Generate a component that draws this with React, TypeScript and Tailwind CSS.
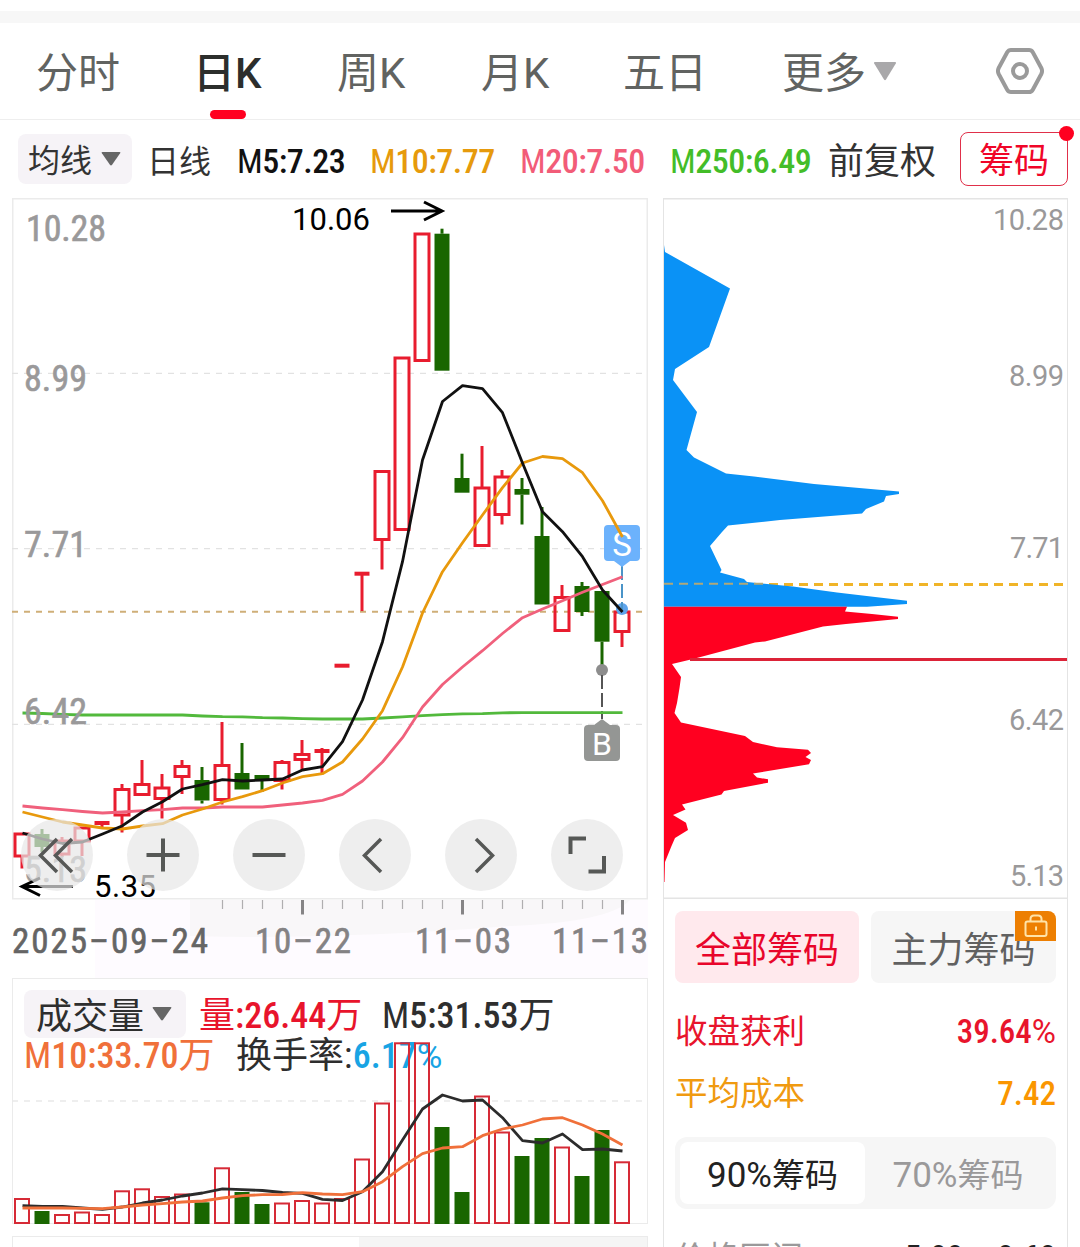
const CJK = "font-['Roboto','Noto_Sans_CJK_SC',sans-serif]";

type Candle = {
  up: boolean;
  top: number;
  bottom: number;
  high?: number;
  low?: number;
  flat?: boolean;
};

const CANDLES: Candle[] = [
  { up: true, top: 834, bottom: 856, low: 868.5 },
  { up: false, top: 834, bottom: 847, high: 829, low: 852 },
  { up: true, top: 841, bottom: 854, high: 837, low: 857 },
  { up: true, top: 828, bottom: 841, low: 856 },
  { up: true, top: 823, bottom: 823, low: 828, flat: true },
  { up: true, top: 789.5, bottom: 815, high: 784, low: 832.5 },
  { up: true, top: 784.5, bottom: 794.5, high: 760 },
  { up: true, top: 788, bottom: 798.5, high: 774, low: 818.5 },
  { up: true, top: 766.5, bottom: 776.5, high: 760, low: 794 },
  { up: false, top: 780, bottom: 800.5, high: 767, low: 803.5 },
  { up: true, top: 765.5, bottom: 799.5, high: 722, low: 804.5 },
  { up: false, top: 773, bottom: 789.5, high: 743 },
  { up: false, top: 775, bottom: 781, low: 792 },
  { up: true, top: 762.5, bottom: 780.5, high: 760, low: 789.5 },
  { up: true, top: 754.5, bottom: 759.5, high: 740, low: 770 },
  { up: true, top: 751, bottom: 751, high: 748, low: 773, flat: true },
  { up: true, top: 665.7, bottom: 665.7, flat: true },
  { up: true, top: 573.7, bottom: 573.7, low: 611, flat: true },
  { up: true, top: 471.5, bottom: 539.5, low: 569.5 },
  { up: true, top: 358, bottom: 529.5 },
  { up: true, top: 234, bottom: 360.5 },
  { up: false, top: 233.7, bottom: 370.7, high: 228.7 },
  { up: false, top: 478, bottom: 492.7, high: 453.7 },
  { up: true, top: 488, bottom: 545.5, high: 446 },
  { up: true, top: 477, bottom: 514.5, high: 470, low: 524.5 },
  { up: false, top: 489, bottom: 494.7, high: 478, low: 524.5 },
  { up: false, top: 536, bottom: 604.5, high: 507 },
  { up: true, top: 597.5, bottom: 630.5, high: 585 },
  { up: false, top: 586, bottom: 612, high: 582, low: 616 },
  { up: false, top: 591, bottom: 641.7, low: 669 },
  { up: true, top: 612, bottom: 631.5, low: 647 },
];

const MA5 = [833, 839, 843.5, 842, 834, 825.7, 812, 801.7, 789, 784.7, 779.7, 781, 780, 779, 770, 766.7, 741.7, 700, 641.7, 561.7, 460, 401.5, 385.7, 388.7, 412.7, 463, 511.7, 531.7, 556.7, 590, 612];
const MA10 = [812, 817, 822, 825, 828, 829, 826, 823.7, 815, 809, 802, 796.7, 790.7, 783, 776.7, 773.7, 762, 739, 710.7, 667, 613, 571.7, 542.7, 515, 487.7, 463, 456.5, 458.7, 472.7, 500.7, 537];
const MA20 = [806, 808, 809.7, 811.5, 813, 812, 810.7, 809.7, 808, 808, 807, 807, 807, 805, 803, 800.3, 794.3, 781, 762, 737.7, 707, 684.5, 667, 650.7, 633.5, 617.7, 609, 600.7, 592.3, 584.5, 576.7];
const MA250 = [713, 713.5, 714.3, 715, 715, 715, 715, 715, 715, 716, 716.7, 716.9, 717.7, 718, 718.7, 719, 719, 719, 718, 716.8, 715.7, 714.7, 713.9, 713.7, 712.8, 712.7, 712.7, 712.7, 712.7, 712.7, 712.7];

const VOLUMES = [1199, 1211, 1215, 1212.5, 1215, 1191.3, 1189.3, 1197, 1194.5, 1202.3, 1168.3, 1192, 1204, 1203.5, 1201, 1203.5, 1199, 1159.5, 1103.5, 1043.3, 1043.3, 1127, 1192, 1096.5, 1132.5, 1156, 1138, 1147.5, 1176, 1130, 1162.3];
const VOL5 = [1205.7, 1206.5, 1206.5, 1208, 1209.3, 1207, 1203, 1200, 1196, 1193, 1188.8, 1189.7, 1190.5, 1192.5, 1193.3, 1199.3, 1200.5, 1191.7, 1171.7, 1140, 1109, 1095, 1101, 1100, 1117.7, 1140.7, 1143, 1134, 1149.7, 1149, 1151];
const VOL10 = [1208, 1208, 1208, 1208.3, 1208.7, 1207, 1205, 1203.7, 1202, 1201, 1198, 1195.7, 1194.7, 1194.5, 1192.7, 1194, 1194.7, 1191.7, 1181.7, 1166.7, 1153.7, 1148, 1146.7, 1135.7, 1129, 1125, 1119, 1117.7, 1125, 1134, 1145];

const CHIPS_ABOVE =
  "664,245 665,252 730,288.5 709,347 675,369 673,380 697,412 686.5,450 694,457.5 726,473.5 754,476.5 814,484 899,491.5 899,494 886,496 884,501.5 866,509 862,513.5 780,520 728,525.5 722,532 710,546 721.5,570 720,572.5 744,579 747,582 793,586.5 837,592.5 907,600.7 907,604 867,606.7 664,606.7";
const CHIPS_BELOW =
  "664,606.7 847,606.7 845,611.5 872,614 898,616.7 898,619 846,624 823,626.5 765,641.5 755,642.5 693,659 672,664 681,677 679.5,688 677,703 674.5,713 681,722.5 745,736 753,742 777,747.3 808,749.7 811,753 805.5,757 811,760 809,764.3 753,773.5 757,777.5 768,779.3 768,782.7 724,791 721.5,794.5 682,804.5 685.5,809.5 673,815 686,822.7 688,830 675,838 671.5,846 665,862 664.5,882 664,882";

const x = (i: number) => 22 + i * 20;
const line = (values: number[]) => values.map((v, i) => `${x(i) + 0.5},${v}`).join(" ");

const TABS = [
  { label: "分时", width: "w-[157px]" },
  { label: "日K", width: "w-[144px]", active: true },
  { label: "周K", width: "w-[144px]" },
  { label: "月K", width: "w-[142px]" },
  { label: "五日", width: "w-[159px]" },
];

const AVERAGES = [
  { name: "M5", value: "7.23", style: "w-[133px] text-[#111]" },
  { name: "M10", value: "7.77", style: "w-[150px] text-[#e69a0c]" },
  { name: "M20", value: "7.50", style: "w-[150px] text-[#f25c78]" },
  { name: "M250", value: "6.49", style: "w-[158px] text-[#43bd28]" },
];

function Average({ name, value }: { name: string; value: string }) {
  return (
    <>
      <span className="font-normal">M</span>
      <span className="font-medium">{name.slice(1)}:{value}</span>
    </>
  );
}

function Tabs() {
  return (
    <div className="flex h-[97px] items-center border-b border-[#eeeeee] pl-[36px] text-[42px] text-[#616361]">
      {TABS.map((t) => (
        <div
          key={t.label}
          className={`relative flex h-full shrink-0 items-center pt-[5px] whitespace-nowrap ${t.width} ${t.active ? "font-medium text-[#2c2e2c]" : ""}`}
        >
          {t.label}
          {t.active && <span className="absolute bottom-0 left-[17px] h-[9px] w-9 rounded-full bg-[#ff0020]" />}
        </div>
      ))}
      <div className="flex w-[213px] items-center gap-[7px]">
        <span className="shrink-0 pt-[5px]">更多</span>
        <svg width="24" height="20" viewBox="0 0 24 20" className="shrink-0">
          <path d="M2 1h20q1.500 0 .8 1.400L13 18.500q-1 1.300-2 0L1.200 2.400Q.5 1 2 1z" fill="#a9a8aa" />
        </svg>
      </div>
      <svg width="50" height="50" viewBox="0 0 50 50" fill="none" stroke="#9a9a9a">
        <path d="M16 4h18q2.500 0 3.800 2.300l8.500 15.700q1.500 3 0 6l-8.500 15.700q-1.300 2.300-3.800 2.300H16q-2.500 0-3.800-2.300L3.700 28q-1.500-3 0-6l8.500-15.700Q13.500 4 16 4z" strokeWidth="4" />
        <circle cx="25" cy="25" r="7" strokeWidth="4" />
      </svg>
    </div>
  );
}

function Caret() {
  return (
    <svg width="20" height="14" viewBox="0 0 20 14" className="shrink-0">
      <path d="M1.500 0h17q1.500 0 .6 1.300l-8 11.500q-1.100 1.300-2.200 0l-8-11.500Q0 0 1.500 0z" fill="#666" />
    </svg>
  );
}

function AverageBar() {
  return (
    <div className="flex h-[78px] items-center pl-[18px] text-[32px] text-[#333]">
      <div className="flex h-[50px] w-[114px] items-center justify-between rounded-lg bg-[#f6f3f7] pr-[11px] pl-[10px]">
        <span className="pt-1">均线</span>
        <Caret />
      </div>
      <span className="ml-[15px] w-[90px] pt-[5px]">日线</span>
      {AVERAGES.map((a) => (
        <span
          key={a.name}
          className={`shrink-0 pt-[3px] text-[34px] tracking-[-0.5px] whitespace-nowrap [font-stretch:75%] ${a.style}`}
        >
          <Average name={a.name} value={a.value} />
        </span>
      ))}
      <span className="w-[132px] pt-[5px] text-[36px] whitespace-nowrap">前复权</span>
      <div className="relative flex h-[54px] w-[108px] items-center justify-center rounded-lg border-[1.500px] border-[#e0304a] pt-[5px] text-[35px] text-[#f00528]">
        筹码
        <span className="absolute -top-[7px] -right-[7px] size-[15px] rounded-full bg-[#ff0020]" />
      </div>
    </div>
  );
}

function RoundButtons() {
  return (
    <g>
      {[57, 163, 269, 375, 481, 587].map((cx) => (
        <circle key={cx} cx={cx} cy="855" r="36" fill="#e7e7e7" fillOpacity="0.7" />
      ))}
      <g fill="none" stroke="#565856" strokeWidth="4">
        <path d="M57 839l-16.500 16.500L57 872M72 839l-16.500 16.500L72 872" strokeWidth="3.500" />
        <path d="M146.500 855h33M163 838.500v33" />
        <path d="M252.500 855h33" />
        <path d="M381 839l-16.500 16.500L381 872M476 839l16.500 16.500L476 872" strokeWidth="3.500" />
        <path d="M570.500 854v-15.500H586M604 856v15.500H588.500" />
      </g>
    </g>
  );
}

function CandleChart() {
  return (
    <svg width="636" height="702" viewBox="12 198 636 702" className="block overflow-visible">
      <rect x="12.750" y="198.750" width="634.500" height="700" fill="#fff" stroke="#ebebeb" strokeWidth="1.500" />
      <g stroke="#e2e2e2" strokeWidth="1.200" strokeDasharray="6 6">
        <path d="M12 373.300h636M12 548.700h636M12 724.300h636" />
      </g>
      <path d="M12 611.700h636" stroke="#cfaf78" strokeWidth="2" strokeDasharray="6 6" />

      {CANDLES.map((c, i) => {
        const color = c.up ? "#e81c2e" : "#196600";
        return (
          <g key={i} stroke={color} strokeWidth="3" fill="none">
            {c.high !== undefined && <path d={`M${x(i)} ${c.high}V${c.top}`} />}
            {c.low !== undefined && <path d={`M${x(i)} ${c.bottom}V${c.low}`} />}
            {c.flat ? (
              <path d={`M${x(i) - 7.5} ${c.top}h15`} strokeWidth="4" />
            ) : c.up ? (
              <rect x={x(i) - 7} y={c.top} width="14" height={c.bottom - c.top} />
            ) : (
              <rect x={x(i) - 7.5} y={c.top} width="15" height={c.bottom - c.top} fill={color} stroke="none" />
            )}
          </g>
        );
      })}

      {/* sell and buy markers */}
      <circle cx="622" cy="609" r="6" fill="#5fa4ec" />
      <path d="M622 566v44" stroke="#4a94c8" strokeWidth="2" strokeDasharray="14 4" />
      <path d="M608 525h28q4 0 4 4v28q0 4-4 4h-6l-8 6-8-6h-6q-4 0-4-4v-28q0-4 4-4z" fill="#6cb2fc" />
      <text x="622" y="556" fontSize="33" fill="#fff" textAnchor="middle">S</text>
      <circle cx="602" cy="670" r="6" fill="#8d8d8d" />
      <path d="M602 675v44" stroke="#555" strokeWidth="2" strokeDasharray="14 4" />
      <path d="M588 725h6l8-6 8 6h6q4 0 4 4v28q0 4-4 4h-28q-4 0-4-4v-28q0-4 4-4z" fill="#949694" />
      <text x="602" y="755" fontSize="32" fill="#fff" textAnchor="middle">B</text>

      <g fill="none" strokeWidth="2.800" strokeLinejoin="round">
        <polyline points={line(MA250)} stroke="#52b93c" />
        <polyline points={line(MA20)} stroke="#f0607c" />
        <polyline points={line(MA10)} stroke="#e8990c" />
        <polyline points={line(MA5)} stroke="#111" />
      </g>

      <g fill="#9a999a" stroke="#9a999a" strokeWidth="0.600" fontSize="36" className="[font-stretch:75%]">
        <text x="26" y="241" textLength="80">10.28</text>
        <text x="24" y="391" textLength="63">8.99</text>
        <text x="24" y="557" textLength="63">7.71</text>
        <text x="24" y="724" textLength="63">6.42</text>
        <text x="24" y="882" textLength="63">5.13</text>
      </g>
      <text x="292" y="230" fontSize="31" textLength="78">10.06</text>
      <text x="94" y="897" fontSize="31" textLength="62">5.35</text>
      <g fill="none" stroke="#000" strokeWidth="3">
        <path d="M391 211h50M424 202l18 9-18 9" />
        <path d="M73 886.500H22M40 878l-18 8.500 18 9" />
      </g>
      <RoundButtons />
    </svg>
  );
}

function DateAxis() {
  return (
    <svg width="636" height="78" viewBox="12 900 636 78" className="block">
      <rect x="95" y="900" width="553" height="78" fill="#fefbff" />
      <path d="M190 900h440q-20 22-120 26-180 14-320 10z" fill="#f9f7f9" />
      {Array.from({ length: 21 }, (_, i) => i + 10).map((i) => {
        const major = (i - 14) % 8 === 0;
        return (
          <path
            key={i}
            d={`M${x(i) + 0.5} 900v${major ? 14.5 : 9}`}
            stroke={major ? "#868486" : "#b0aeb0"}
            strokeWidth={major ? 3 : 1.2}
          />
        );
      })}
      <g fontSize="35" fill="#848284" stroke="#848284" strokeWidth="0.600" className="[font-stretch:75%]">
        <text x="12" y="953" textLength="196" fill="#656565" stroke="#656565">2025–09–24</text>
        <text x="255" y="953" textLength="96">10–22</text>
        <text x="415" y="953" textLength="96">11–03</text>
        <text x="552" y="953" textLength="96">11–13</text>
      </g>
    </svg>
  );
}

function VolumeBars() {
  return (
    <svg width="636" height="184" viewBox="12 1040 636 184" className="absolute -bottom-px -left-px">
      <path d="M12 1101h636" stroke="#e9e9e9" strokeWidth="1.500" strokeDasharray="6 6" />
      {VOLUMES.map((top, i) =>
        CANDLES[i].up ? (
          <rect key={i} x={x(i) - 7} y={top} width="14" height={1223 - top} fill="none" stroke="#d62a36" strokeWidth="2" />
        ) : (
          <rect key={i} x={x(i) - 7.5} y={top} width="15" height={1224 - top} fill="#196600" />
        )
      )}
      <g fill="none" strokeWidth="2.800" strokeLinejoin="round">
        <polyline points={line(VOL5)} stroke="#2c2c2c" />
        <polyline points={line(VOL10)} stroke="#f0703a" />
      </g>
    </svg>
  );
}

function VolumePanel() {
  return (
    <div className="relative h-[246px] border-[1.500px] border-[#ebebeb] pt-[11px] pl-[11px] text-[36px] text-[#2e2e2e]">
      <div className="flex h-[48px] items-center whitespace-nowrap">
        <div className="flex h-[48px] w-[162px] items-center justify-between rounded-lg bg-[#f6f3f7] pr-[14px] pl-[12px]">
          <span className="pt-[5px]">成交量</span>
          <Caret />
        </div>
        <span className="ml-[13px] w-[183px] pt-[4px] text-[#e8142c] [font-stretch:75%]">
          量<span className="font-medium">:26.44</span>万
        </span>
        <span className="pt-[4px] [font-stretch:75%]">
          <Average name="M5" value="31.53" />万
        </span>
      </div>
      <div className="flex h-8 items-center pt-1 whitespace-nowrap">
        <span className="w-[212px] text-[#f0703a] [font-stretch:75%]">
          <Average name="M10" value="33.70" />万
        </span>
        <span>
          换手率:
          <span className="text-[#18a4e4]">
            <span className="font-medium [font-stretch:75%]">6.17</span>
            <span className="text-[35px]">%</span>
          </span>
        </span>
      </div>
      <VolumeBars />
    </div>
  );
}

function ChipChart() {
  return (
    <svg width="405" height="701" viewBox="663 198 405 701" className="-ml-px block">
      <path d="M663 198.750h405M663 898.250h405" stroke="#e4e4e4" strokeWidth="1.500" />
      <path d="M664 584.500h400" stroke="#f0b428" strokeWidth="3" strokeDasharray="9 6" />
      <polygon points={CHIPS_ABOVE} fill="#0a92f6" />
      <path d="M664 583.700h100" stroke="#b0a878" strokeWidth="2" strokeDasharray="9 6" />
      <polygon points={CHIPS_BELOW} fill="#ff0020" />
      <path d="M690 659.500h378" stroke="#dc2338" strokeWidth="2.800" />
      <g fill="#9a999a" fontSize="29" textAnchor="end">
        <text x="1064" y="230" textLength="71">10.28</text>
        <text x="1064" y="386" textLength="55">8.99</text>
        <text x="1064" y="558" textLength="54">7.71</text>
        <text x="1064" y="730" textLength="55">6.42</text>
        <text x="1064" y="886" textLength="54">5.13</text>
      </g>
    </svg>
  );
}

function ChipPanel() {
  return (
    <div className="h-[1049px] w-[405px] overflow-hidden border-x border-[#e4e4e4]">
      <ChipChart />
      <div className="px-[11px] pt-3">
        <div className="flex gap-3 text-[36px]">
          <div className="flex h-[72px] w-[184px] items-center justify-center rounded-lg bg-[#ffe9ed] pt-[7px] text-[#e8052a]">
            全部筹码
          </div>
          <div className="relative flex h-[72px] w-[185px] items-center justify-center rounded-lg bg-[#f6f6f6] pt-[7px] text-[#616161]">
            主力筹码
            <span className="absolute top-0 right-0 flex h-[30px] w-[41px] items-center justify-center rounded-tr-lg bg-[#ed7f02]">
              <svg width="24" height="24" viewBox="0 0 24 24" fill="none" stroke="#ffe3a8" strokeWidth="2">
                <rect x="1.500" y="7.500" width="21" height="14.500" rx="2" />
                <path d="M6.500 7.500V5q0-3.500 3.500-3.500h4q3.500 0 3.500 3.500v2.500M12 12.500v4" />
              </svg>
            </span>
          </div>
        </div>

        <div className="mt-[17px] flex h-[62px] items-center justify-between text-[32.500px] text-[#e8142c]">
          <span className="pt-[3px]">收盘获利</span>
          <span className="text-[33px]">
            <span className="font-medium [font-stretch:75%]">39.64</span>%
          </span>
        </div>
        <div className="flex h-[62px] items-center justify-between text-[32.500px] text-[#f09a10]">
          <span className="pt-[3px]">平均成本</span>
          <span className="text-[33px] font-medium text-[#fa9600] [font-stretch:75%]">7.42</span>
        </div>

        <div className="mt-[13px] flex h-[72px] w-[381px] rounded-xl bg-[#f6f6f6] p-[5px] text-[33px]">
          <div className="flex w-[185px] items-center justify-center rounded-lg bg-white pt-1 text-[#222]">
            <span className="text-[35px]">90%</span>筹码
          </div>
          <div className="flex flex-1 items-center justify-center pt-1 text-[#9a999a]">
            <span className="text-[35px]">70%</span>筹码
          </div>
        </div>

        <div className="mt-[24px] flex h-[48px] items-center justify-between text-[32px] whitespace-nowrap text-[#9a999a]">
          <span className="pt-[2px]">价格区间</span>
          <span className="flex text-[33px] font-medium text-[#222] [font-stretch:75%]">
            5.88<span className="w-[34px] text-center">–</span>8.68
          </span>
        </div>
      </div>
    </div>
  );
}

export default function App() {
  return (
    <div className={`h-[1247px] w-[1080px] overflow-hidden bg-white pt-[11px] leading-none ${CJK}`}>
      <div className="h-3 bg-[#f7f7f7]" />
      <Tabs />
      <AverageBar />
      <div className="flex gap-[15px] pl-3">
        <div className="w-[636px]">
          <CandleChart />
          <DateAxis />
          <VolumePanel />
          <div className="mt-3 flex h-8 border-[1.500px] border-[#ebebeb]">
            <div className="ml-[346px] flex-1 bg-[#f5f5f5]" />
          </div>
        </div>
        <ChipPanel />
      </div>
    </div>
  );
}
